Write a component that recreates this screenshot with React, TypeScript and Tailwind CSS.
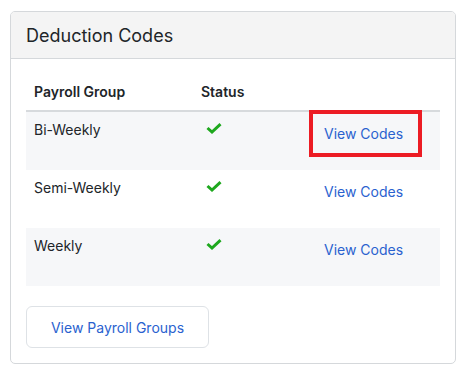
import React from "react";

function Check() {
  return (
    <svg width="16" height="11" viewBox="0 0 16 11" className="block">
      <polyline points="1.5,5 6,9 14.5,1.2" fill="none" stroke="#1ea81e" strokeWidth="3" strokeLinecap="butt" strokeLinejoin="miter" />
    </svg>
  );
}

const rows = ["Bi-Weekly", "Semi-Weekly", "Weekly"];

export default function App() {
  return (
    <div className="min-h-[371px] w-[463px] bg-white pt-[11px] pl-[10px]" style={{ fontFamily: "Inter, 'Noto Sans', sans-serif" }}>
      <div className="w-[446px] rounded-[5px] border border-[#d5d8db] overflow-hidden">
        <div className="bg-[#f4f4f4] border-b border-[#d5d8db] h-[47px] pl-[15px] flex items-center">
          <span className="text-[18px] leading-[27px] text-[#212529]">Deduction Codes</span>
        </div>
        <div className="px-[15px] pt-[15px] pb-[15px]">
          <div className="grid grid-cols-[167px_123px_1fr] border-b-2 border-[#d7dadd] text-[14px] leading-[20px] font-semibold text-[#212529]">
            <div className="pl-[8px] py-[8px]">Payroll Group</div>
            <div className="pl-[8px] py-[8px]">Status</div>
            <div />
          </div>
          {rows.map((r, i) => (
            <div key={r} className={`grid grid-cols-[167px_123px_1fr] h-[58px] text-[14px] leading-[20px] ${i % 2 === 0 ? "bg-[#f6f7f9]" : "bg-white"}`}>
              <div className="pl-[8px] pt-[8px] text-[#212529]">{r}</div>
              <div className="pl-[13px] pt-[11px]"><Check /></div>
              <div className="pl-[8px] pt-[12px]">
                <span className="relative inline-block text-[#2a62cf] text-[14px]">
                  View Codes
                  {i === 0 && (
                    <span className="absolute left-[-15px] top-[-14px] w-[113px] h-[47px] border-4 border-[#ec1c24]" />
                  )}
                </span>
              </div>
            </div>
          ))}
          <div className="mt-[20px]">
            <button className="w-[183px] h-[42px] rounded-[6px] border border-[#dee2e6] bg-white text-[14px] text-[#2a62cf]">
              View Payroll Groups
            </button>
          </div>
        </div>
      </div>
    </div>
  );
}
